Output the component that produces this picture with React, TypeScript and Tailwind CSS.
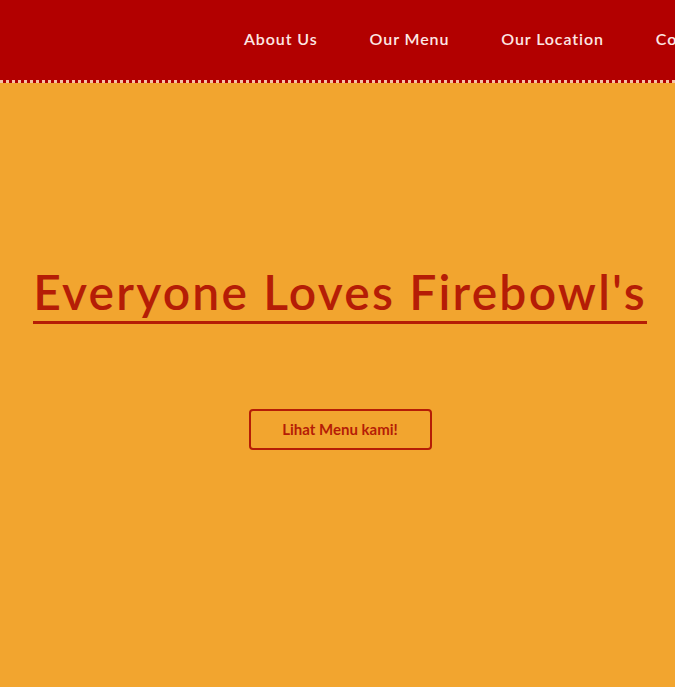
export default function App() {
  const links = ["About Us", "Our Menu", "Our Location", "Contact"];

  return (
    <div className="min-h-[687px] w-full overflow-hidden bg-[#f2a52f] font-['Lato',sans-serif]">
      {/* Header */}
      <header className="flex h-[83px] items-center border-b-[3px] border-dotted border-[#f6c2a4] bg-[#b20000]">
        <nav className="ml-[244px] flex gap-[52px] whitespace-nowrap pb-[2px]">
          {links.map((l) => (
            <a key={l} className="text-[16px] font-semibold tracking-[0.9px] text-[#fde7e4]">
              {l}
            </a>
          ))}
        </nav>
      </header>

      {/* Hero */}
      <section className="flex flex-col items-center pl-[5px] pt-[182px]">
        <h1 className="border-b-[3px] border-[#b51d06] pb-[2px] text-[48px] font-semibold leading-[54px] tracking-[2.2px] text-[#b51d06]">
          Everyone Loves Firebowl's
        </h1>
        <button className="mt-[85px] h-[41px] w-[183px] rounded-[4px] border-2 border-[#b51d06] text-[15px] font-bold text-[#b51d06]">
          Lihat Menu kami!
        </button>
      </section>
    </div>
  );
}
